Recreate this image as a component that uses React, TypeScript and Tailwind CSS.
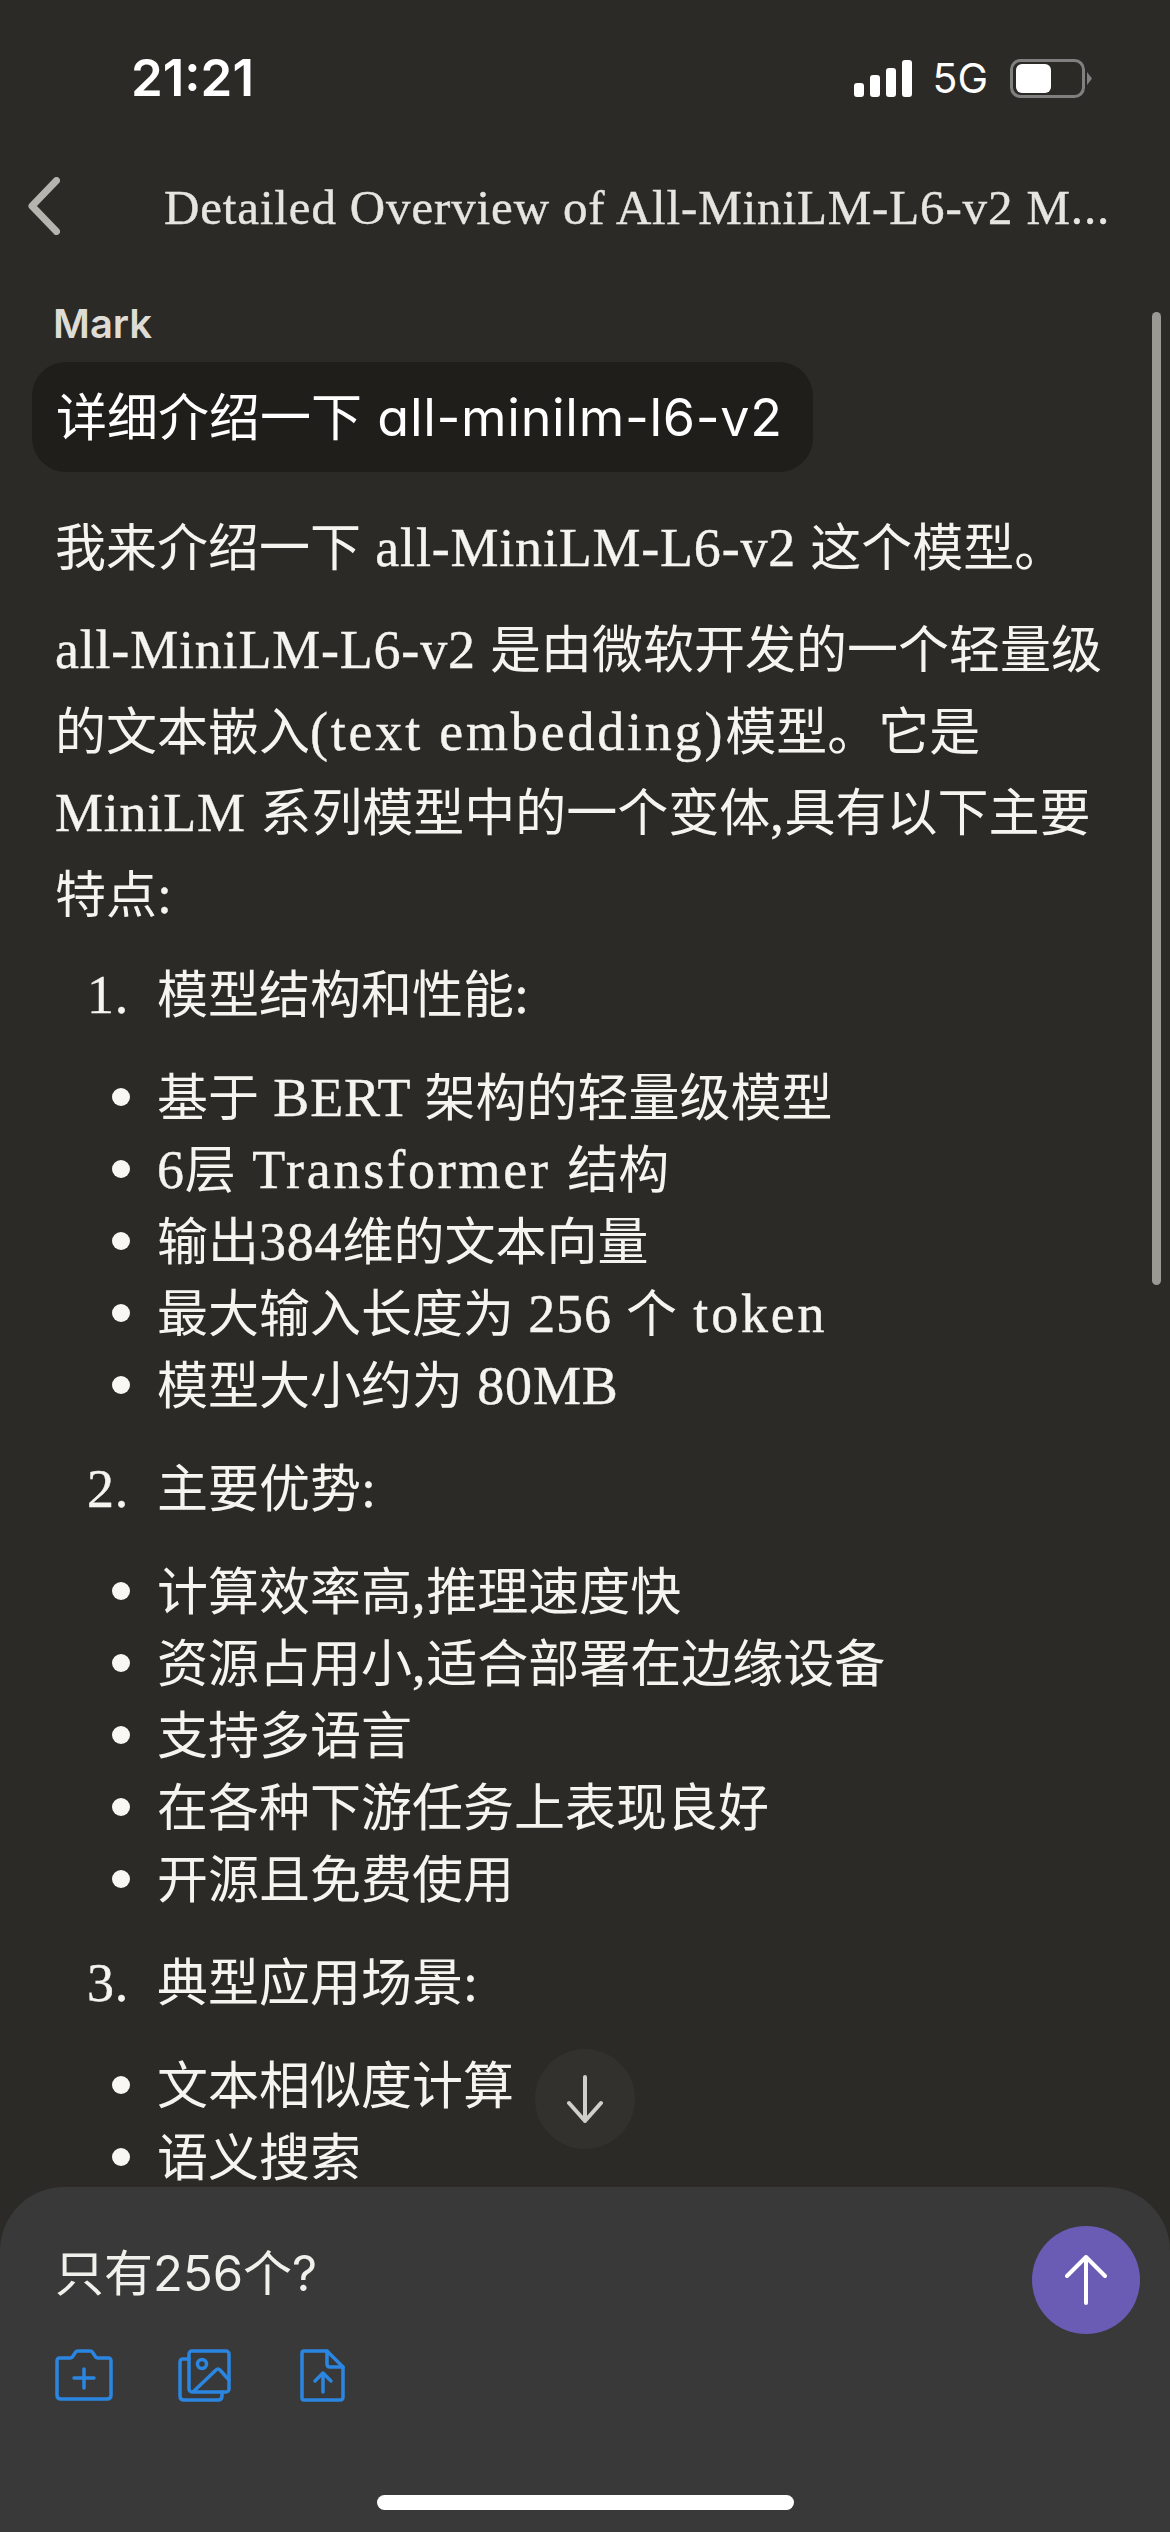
function T({ s, sans }: { s: string; sans?: boolean }) {
  const parts = s.split(/([\x00-\x7f]+)/).filter(Boolean);
  return (
    <>
      {parts.map((p, i) =>
        /^[\x00-\x7f]/.test(p) ? (
          sans ? (
            <span key={i} className="font-['Inter',sans-serif] text-[52px] leading-[0px] tracking-[0.7px] [font-feature-settings:'cv11','ss03']">{p}</span>
          ) : /^[^0-9-]*[a-z]{4,}[^0-9-]*$/.test(p) ? (
            <span key={i} className="font-['Liberation_Serif',serif] text-[54px] leading-[0px] tracking-[2.8px] [-webkit-text-stroke:0.4px]">{p}</span>
          ) : (
            <span key={i} className="font-['Liberation_Serif',serif] text-[54px] leading-[0px] tracking-[0.8px] [-webkit-text-stroke:0.4px]">{p}</span>
          )
        ) : (
          <span key={i}>{p}</span>
        ),
      )}
    </>
  );
}

function Sub({ items }: { items: string[] }) {
  return (
    <ul className="my-[26px] ml-[112px] flex flex-col">
      {items.map((t) => (
        <li key={t} className="relative h-[72px] whitespace-nowrap pl-[45px] leading-[72px]">
          <span className="absolute left-0 top-[30px] h-[18px] w-[18px] rounded-full bg-[#f8f7f3]" />
          <T s={t} />
        </li>
      ))}
    </ul>
  );
}

function Head({ n, t }: { n: string; t: string }) {
  return (
    <div className="ml-[87px] flex h-[82px] items-center leading-[82px]">
      <span className="w-[70px] shrink-0"><T s={n} /></span>
      <span><T s={t} /></span>
    </div>
  );
}

export default function App() {
  return (
    <div className="relative flex h-[2532px] w-[1170px] flex-col overflow-hidden bg-[#2b2a27] text-[51px] text-[#f5f4ef] font-['Noto_Sans_CJK_SC',sans-serif]">
      <div className="flex h-[154px] items-center justify-between pl-[131px] pr-[78px] pt-[2px] font-['Inter',sans-serif] text-white">
        <span className="text-[51px] font-semibold">21:21</span>
        <div className="flex items-center">
          <svg width="58" height="37" viewBox="0 0 58 37" fill="#fff"><rect x="0" y="23" width="10" height="14" rx="3" /><rect x="16" y="15" width="10" height="22" rx="3" /><rect x="32" y="8" width="10" height="29" rx="3" /><rect x="48" y="0" width="10" height="37" rx="3" /></svg>
          <span className="ml-[20px] text-[41px] font-normal leading-none">5G</span>
          <svg className="ml-[22px]" width="82" height="39" viewBox="0 0 82 39"><rect x="1.5" y="1.5" width="72" height="36" rx="9" fill="none" stroke="#808080" strokeWidth="3" /><rect x="6" y="5" width="35" height="29" rx="6" fill="#fff" /><path d="M77 13 L82 19.5 L77 26 Z" fill="#808080" /></svg>
        </div>
      </div>
      <div className="flex h-[104px] items-center">
        <svg className="ml-[28px]" width="32" height="58" viewBox="0 0 32 58" fill="none"><path d="M28.5 3.5 L4 29 L28.5 54.5" stroke="#b5b4ae" strokeWidth="7" strokeLinecap="round" strokeLinejoin="round" /></svg>
        <span className="ml-[104px] whitespace-nowrap pt-[3px] font-['Liberation_Serif',serif] text-[49px] tracking-[0.85px] text-[#e6e5df] [-webkit-text-stroke:0.4px]">Detailed Overview of All-MiniLM-L6-v2 M...</span>
      </div>
      <div className="relative flex-1">
        <div className="ml-[53px] mt-[43px] font-['Inter',sans-serif] text-[40px] font-semibold leading-[46px] text-[#dedcd5]">Mark</div>
        <div className="ml-[32px] mt-[15px] flex h-[110px] w-[781px] items-center whitespace-pre rounded-[34px] bg-[#1f1e1b] pb-[5px] pl-[24px] text-white"><span><T s="详细介绍一下 all-minilm-l6-v2" sans /></span></div>
        <p className="ml-[55px] mt-[31px] h-[82px] whitespace-nowrap leading-[82px]"><T s="我来介绍一下 all-MiniLM-L6-v2 这个模型。" /></p>
        <p className="mb-[18px] ml-[55px] mr-[50px] mt-[21px] leading-[81.5px]"><T s="all-MiniLM-L6-v2 是由微软开发的一个轻量级的文本嵌入(text embedding)模型。它是 MiniLM 系列模型中的一个变体,具有以下主要特点:" /></p>
        <Head n="1." t="模型结构和性能:" />
        <Sub items={["基于 BERT 架构的轻量级模型", "6层 Transformer 结构", "输出384维的文本向量", "最大输入长度为 256 个 token", "模型大小约为 80MB"]} />
        <Head n="2." t="主要优势:" />
        <Sub items={["计算效率高,推理速度快", "资源占用小,适合部署在边缘设备", "支持多语言", "在各种下游任务上表现良好", "开源且免费使用"]} />
        <Head n="3." t="典型应用场景:" />
        <Sub items={["文本相似度计算", "语义搜索"]} />
        <div className="absolute right-[9px] top-[54px] h-[973px] w-[9px] rounded-full bg-[#9a9994]" />
        <div className="absolute left-[535px] top-[1791px] flex h-[100px] w-[100px] items-center justify-center rounded-full bg-[#32312e]">
          <svg width="38" height="48" viewBox="0 0 38 48" fill="none" stroke="#d0cfc9" strokeWidth="4" strokeLinecap="round" strokeLinejoin="round"><path d="M19 2 V46 M3 28 L19 46 L35 28" /></svg>
        </div>
      </div>
      <div className="absolute bottom-0 left-0 h-[345px] w-[1170px] rounded-t-[64px] bg-[#393939]">
        <div className="flex h-[162px] items-start justify-between pl-[55px] pr-[30px] pt-[39px]">
          <span className="mt-[12px] text-[49px] leading-[72px] text-[#f0f0ec] font-['Inter','Noto_Sans_CJK_SC',sans-serif]">只有256个?</span>
          <div className="flex h-[108px] w-[108px] items-center justify-center rounded-full bg-[#6a5bb5]">
            <svg width="42" height="50" viewBox="0 0 42 50" fill="none" stroke="#fff" strokeWidth="4" strokeLinecap="round" strokeLinejoin="round"><path d="M21 48 V2 M2 21 L21 2 L40 21" /></svg>
          </div>
        </div>
        <div className="ml-[55px] flex items-start">
          <svg width="58" height="52" viewBox="0 0 58 52" fill="none" stroke="#2b86e2" strokeWidth="3.5" strokeLinejoin="round" strokeLinecap="round"><path d="M5 9 H15 Q17 9 18 7 L20 4 Q21 2 23 2 H35 Q37 2 38 4 L40 7 Q41 9 43 9 H53 Q56 9 56 12 V46 Q56 50 52 50 H6 Q2 50 2 46 V12 Q2 9 5 9 Z" /><path d="M29 20 V39 M19 29 H39" /></svg>
          <svg className="ml-[65px]" width="53" height="53" viewBox="0 0 53 53" fill="none" stroke="#2b86e2" strokeWidth="3.5" strokeLinejoin="round" strokeLinecap="round"><rect x="11" y="2" width="40" height="41" rx="3" /><path d="M11 10 H5 Q2 10 2 13 V47 Q2 51 6 51 H40 Q44 51 44 47 V43" /><circle cx="24" cy="15" r="4.5" /><path d="M16 42 L38 21 Q40 19 42 21 L51 31" /></svg>
          <svg className="ml-[69px]" width="45" height="53" viewBox="0 0 45 53" fill="none" stroke="#2b86e2" strokeWidth="3.5" strokeLinejoin="round" strokeLinecap="round"><path d="M4 2 H27 L43 18 V48 Q43 51 40 51 H4 Q2 51 2 49 V4 Q2 2 4 2 Z" /><path d="M27 2 V15 Q27 18 30 18 H43" /><path d="M23 43 V24 M15 32 L23 24 L31 32" /></svg>
        </div>
        <div className="absolute bottom-[22px] left-[377px] h-[15px] w-[417px] rounded-full bg-white" />
      </div>
    </div>
  );
}
